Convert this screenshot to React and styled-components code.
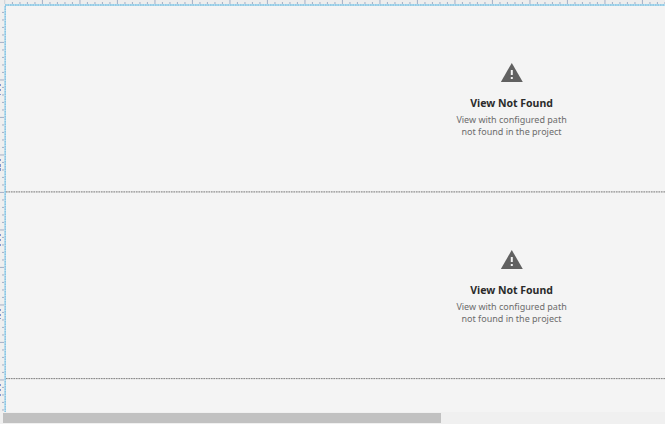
import React from "react";
import styled, { createGlobalStyle } from "styled-components";

const GlobalStyle = createGlobalStyle`
  * { box-sizing: border-box; }
  body { margin: 0; background: #f4f4f4; overflow: hidden; }
`;

const Designer = styled.div`
  display: grid;
  grid-template-columns: 6px minmax(0, 1fr);
  grid-template-rows: 6px minmax(0, 1fr) 12px;
  width: 100vw;
  height: 100vh;
  overflow: hidden;
  background: #f4f4f4;
  font-family: "Noto Sans", sans-serif;
`;

const TopRuler = styled.svg`
  grid-column: 1 / -1;
  display: block;
  width: 665px;
  height: 6px;
  background: #ededed;
`;

const SideRuler = styled.svg`
  display: block;
  width: 6px;
  height: 406px;
  background: #efefef;
`;

const Canvas = styled.main`
  display: flex;
  flex-direction: column;
  width: 1011px;
  height: 406px;
  overflow: hidden;
`;

const ViewSlot = styled.section`
  flex: none;
  display: flex;
  flex-direction: column;
  align-items: center;
  height: ${(p) => p.$height}px;
  padding-top: ${(p) => p.$top}px;
`;

const Divider = styled.svg`
  flex: none;
  display: block;
  width: 100%;
  height: 2px;
`;

const WarningIcon = styled.svg`
  display: block;
  width: 22px;
  height: 19px;
`;

const ZoomedText = styled.div`
  margin-top: 13px;
  text-align: center;
  white-space: nowrap;
  transform: scale(0.75);
  transform-origin: 50% 0;
`;

const Title = styled.h2`
  margin: 0;
  font-size: 14px;
  line-height: 22px;
  font-weight: 700;
  color: #2b2b2b;
`;

const Message = styled.p`
  margin: 3px 0 0;
  font-size: 12px;
  line-height: 16px;
  color: #6c6c6c;
`;

const ScrollTrack = styled.div`
  grid-column: 1 / -1;
  padding: 1px 0 1px 3px;
  background: #f0f0f0;
`;

const ScrollThumb = styled.div`
  width: 438px;
  height: 10px;
  background: #c1c1c1;
`;

const ticks = (length) =>
  Array.from({ length: Math.floor((length - 5) / 7.5) + 1 }, (_, i) => ({
    at: 4.9 + i * 7.5,
    major: i % 5 === 0,
  })).slice(1);

const labelMarks = [
  [84, 2], [89, 2], [94, 1],
  [159, 2], [164, 3], [168, 3],
  [234, 2], [239, 2], [244, 2],
  [309, 2], [314, 2], [318, 1],
  [384, 2], [389, 2], [394, 2],
];

function NotFound({ height, top }) {
  return (
    <ViewSlot $height={height} $top={top}>
      <WarningIcon viewBox="0 0 22 19">
        <path d="M10.8 0 21.8 19H-.2Z" fill="#616161" />
        <path d="M9.8 7h2v5h-2zM9.8 14h2v2h-2z" fill="#f4f4f4" />
      </WarningIcon>
      <ZoomedText>
        <Title>View Not Found</Title>
        <Message>
          View with configured path
          <br />
          not found in the project
        </Message>
      </ZoomedText>
    </ViewSlot>
  );
}

function DashedDivider({ offset }) {
  return (
    <Divider>
      <path d={`M0 ${offset}H1011`} stroke="#d4d4d4" />
      <path d={`M0 ${offset}H1011`} stroke="#858585" strokeDasharray="1.5 1" />
    </Divider>
  );
}

export default function App() {
  return (
    <>
      <GlobalStyle />
      <Designer>
        <TopRuler viewBox="0 0 665 6">
          {ticks(665).map((t) => (
            <rect key={t.at} x={t.at - 0.5} y={t.major ? 0 : 2} width="1.1" height={t.major ? 4 : 2} fill="#a9b5ca" />
          ))}
          <rect x="4.2" y="0" width="1" height="4" fill="#ccd2d8" />
          <rect x="5" y="4" width="660" height="1" fill="#b2def0" />
          <rect x="5" y="5" width="660" height="1" fill="#b2dced" />
          <path d="M5 5H665" stroke="#77b7dc" strokeWidth="1" strokeDasharray="1.5 1" />
        </TopRuler>
        <SideRuler viewBox="0 6 6 406">
          {ticks(412).map((t) => (
            <rect key={t.at} x={t.major ? 0 : 2} y={t.at - 0.5} width={t.major ? 4 : 2} height="1.1" fill="#a9b5ca" />
          ))}
          {labelMarks.map(([y, h]) => (
            <rect key={y} x="0" y={y} width="1" height={h} fill="#7f98d0" />
          ))}
          <rect x="4.3" y="6" width="1.7" height="406" fill="#b2def0" />
          <path d="M5.2 6V412" stroke="#77b7dc" strokeWidth="1" strokeDasharray="1.5 1" />
        </SideRuler>
        <Canvas>
          <NotFound height={185} top={57} />
          <DashedDivider offset={0.9} />
          <NotFound height={185} top={57} />
          <DashedDivider offset={0.6} />
        </Canvas>
        <ScrollTrack>
          <ScrollThumb />
        </ScrollTrack>
      </Designer>
    </>
  );
}
